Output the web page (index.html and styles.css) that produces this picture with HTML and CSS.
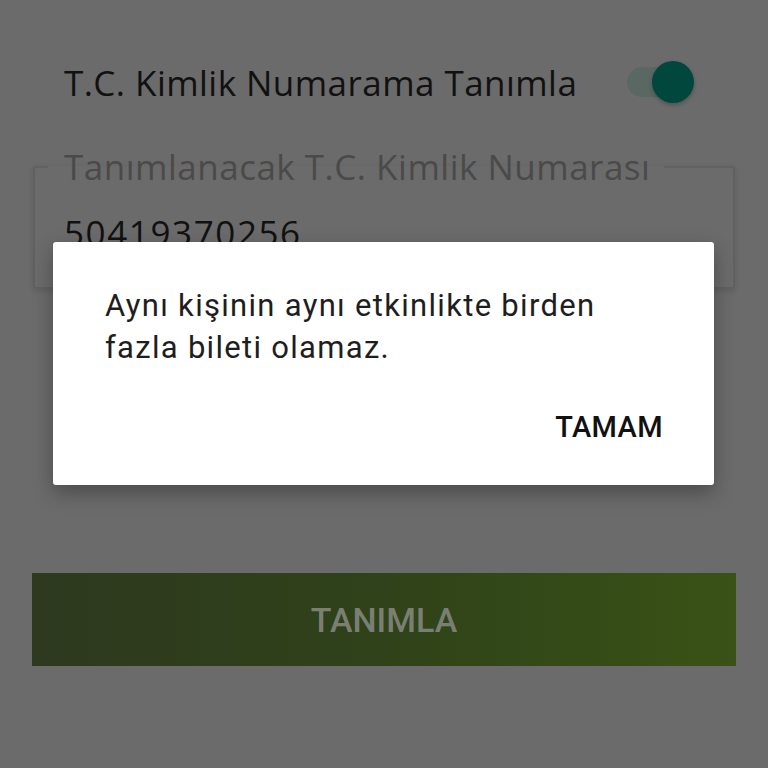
FILE: index.html
```html
<!DOCTYPE html>
<html lang="tr">
<head>
<meta charset="utf-8">
<title>T.C. Kimlik</title>
<link rel="stylesheet" href="styles.css">
</head>
<body>
<main class="page">
  <div class="switch-row">
    <span class="switch-label">T.C. Kimlik Numarama Tanımla</span>
    <span class="switch">
      <span class="switch-track"></span>
      <span class="switch-thumb"></span>
    </span>
  </div>
  <fieldset class="field">
    <legend class="field-label">Tanımlanacak T.C. Kimlik Numarası</legend>
    <div class="field-value">50419370256</div>
  </fieldset>
  <button class="primary-btn" type="button">TANIMLA</button>
</main>
<div class="dialog" role="alertdialog">
  <p class="dialog-text">Aynı kişinin aynı etkinlikte birden fazla bileti olamaz.</p>
  <div class="dialog-actions">
    <button class="dialog-btn" type="button">TAMAM</button>
  </div>
</div>
</body>
</html>
```
FILE: styles.css
```css
html, body {
  margin: 0;
  padding: 0;
}
body {
  width: 768px;
  height: 768px;
  background: #6b6b6b;
  font-family: "Open Sans", Lato, sans-serif;
  position: relative;
  overflow: hidden;
}
.page {
  display: flex;
  flex-direction: column;
  padding-top: 60px;
}
.switch-row {
  display: flex;
  align-items: center;
  justify-content: space-between;
  padding: 0 74px 0 64px;
  height: 44px;
}
.switch-label {
  font-size: 35px;
  color: #111111;
  letter-spacing: 0.45px;
}
.switch {
  position: relative;
  width: 67px;
  height: 44px;
  display: block;
}
.switch-track {
  position: absolute;
  left: 0;
  top: 7px;
  width: 60px;
  height: 30px;
  border-radius: 15px;
  background: #5a6864;
}
.switch-thumb {
  position: absolute;
  right: 0;
  top: 1px;
  width: 42px;
  height: 42px;
  border-radius: 50%;
  background: #01473d;
  box-shadow: 0 2px 4px rgba(0,0,0,0.25);
}
.field {
  margin: 45px 33px 0 33px;
  border: 2px solid #616161;
  border-radius: 2px;
  padding: 0 0 0 13px;
  height: 140px;
  box-sizing: border-box;
  box-shadow: 0 2px 6px rgba(0,0,0,0.12);
}
.field-label {
  font-size: 35px;
  line-height: 36px;
  color: #4a4a4a;
  padding: 0 14px 0 16px;
  letter-spacing: 0.5px;
}
.field-value {
  padding-left: 16px;
  margin-top: 28px;
  font-size: 35px;
  line-height: 40px;
  letter-spacing: 1.6px;
  color: #111111;
}
.primary-btn {
  margin: 284px 32px 0 32px;
  height: 93px;
  border: none;
  border-radius: 0;
  background: linear-gradient(90deg, #2e391f 0%, #2f4219 50%, #3a5216 100%);
  color: #7b7f73;
  font-family: Roboto, sans-serif;
  font-weight: 500;
  font-size: 34px;
  letter-spacing: 0;
  padding: 0;
}
.dialog {
  position: absolute;
  left: 53px;
  top: 242px;
  width: 661px;
  height: 243px;
  box-sizing: border-box;
  background: #ffffff;
  border-radius: 3px;
  box-shadow: 0 8px 20px rgba(0,0,0,0.3);
  padding: 43px 51px 0 52px;
  font-family: Roboto, sans-serif;
}
.dialog-text {
  margin: 0;
  font-size: 31px;
  line-height: 42px;
  letter-spacing: 1.3px;
  color: #1e1e1e;
  padding-right: 30px;
}
.dialog-actions {
  display: flex;
  justify-content: flex-end;
  margin-top: 42px;
}
.dialog-btn {
  background: none;
  border: none;
  padding: 0;
  font-family: Roboto, sans-serif;
  font-weight: 500;
  font-size: 29px;
  line-height: 32px;
  color: #111111;
  letter-spacing: 0.4px;
}
```
